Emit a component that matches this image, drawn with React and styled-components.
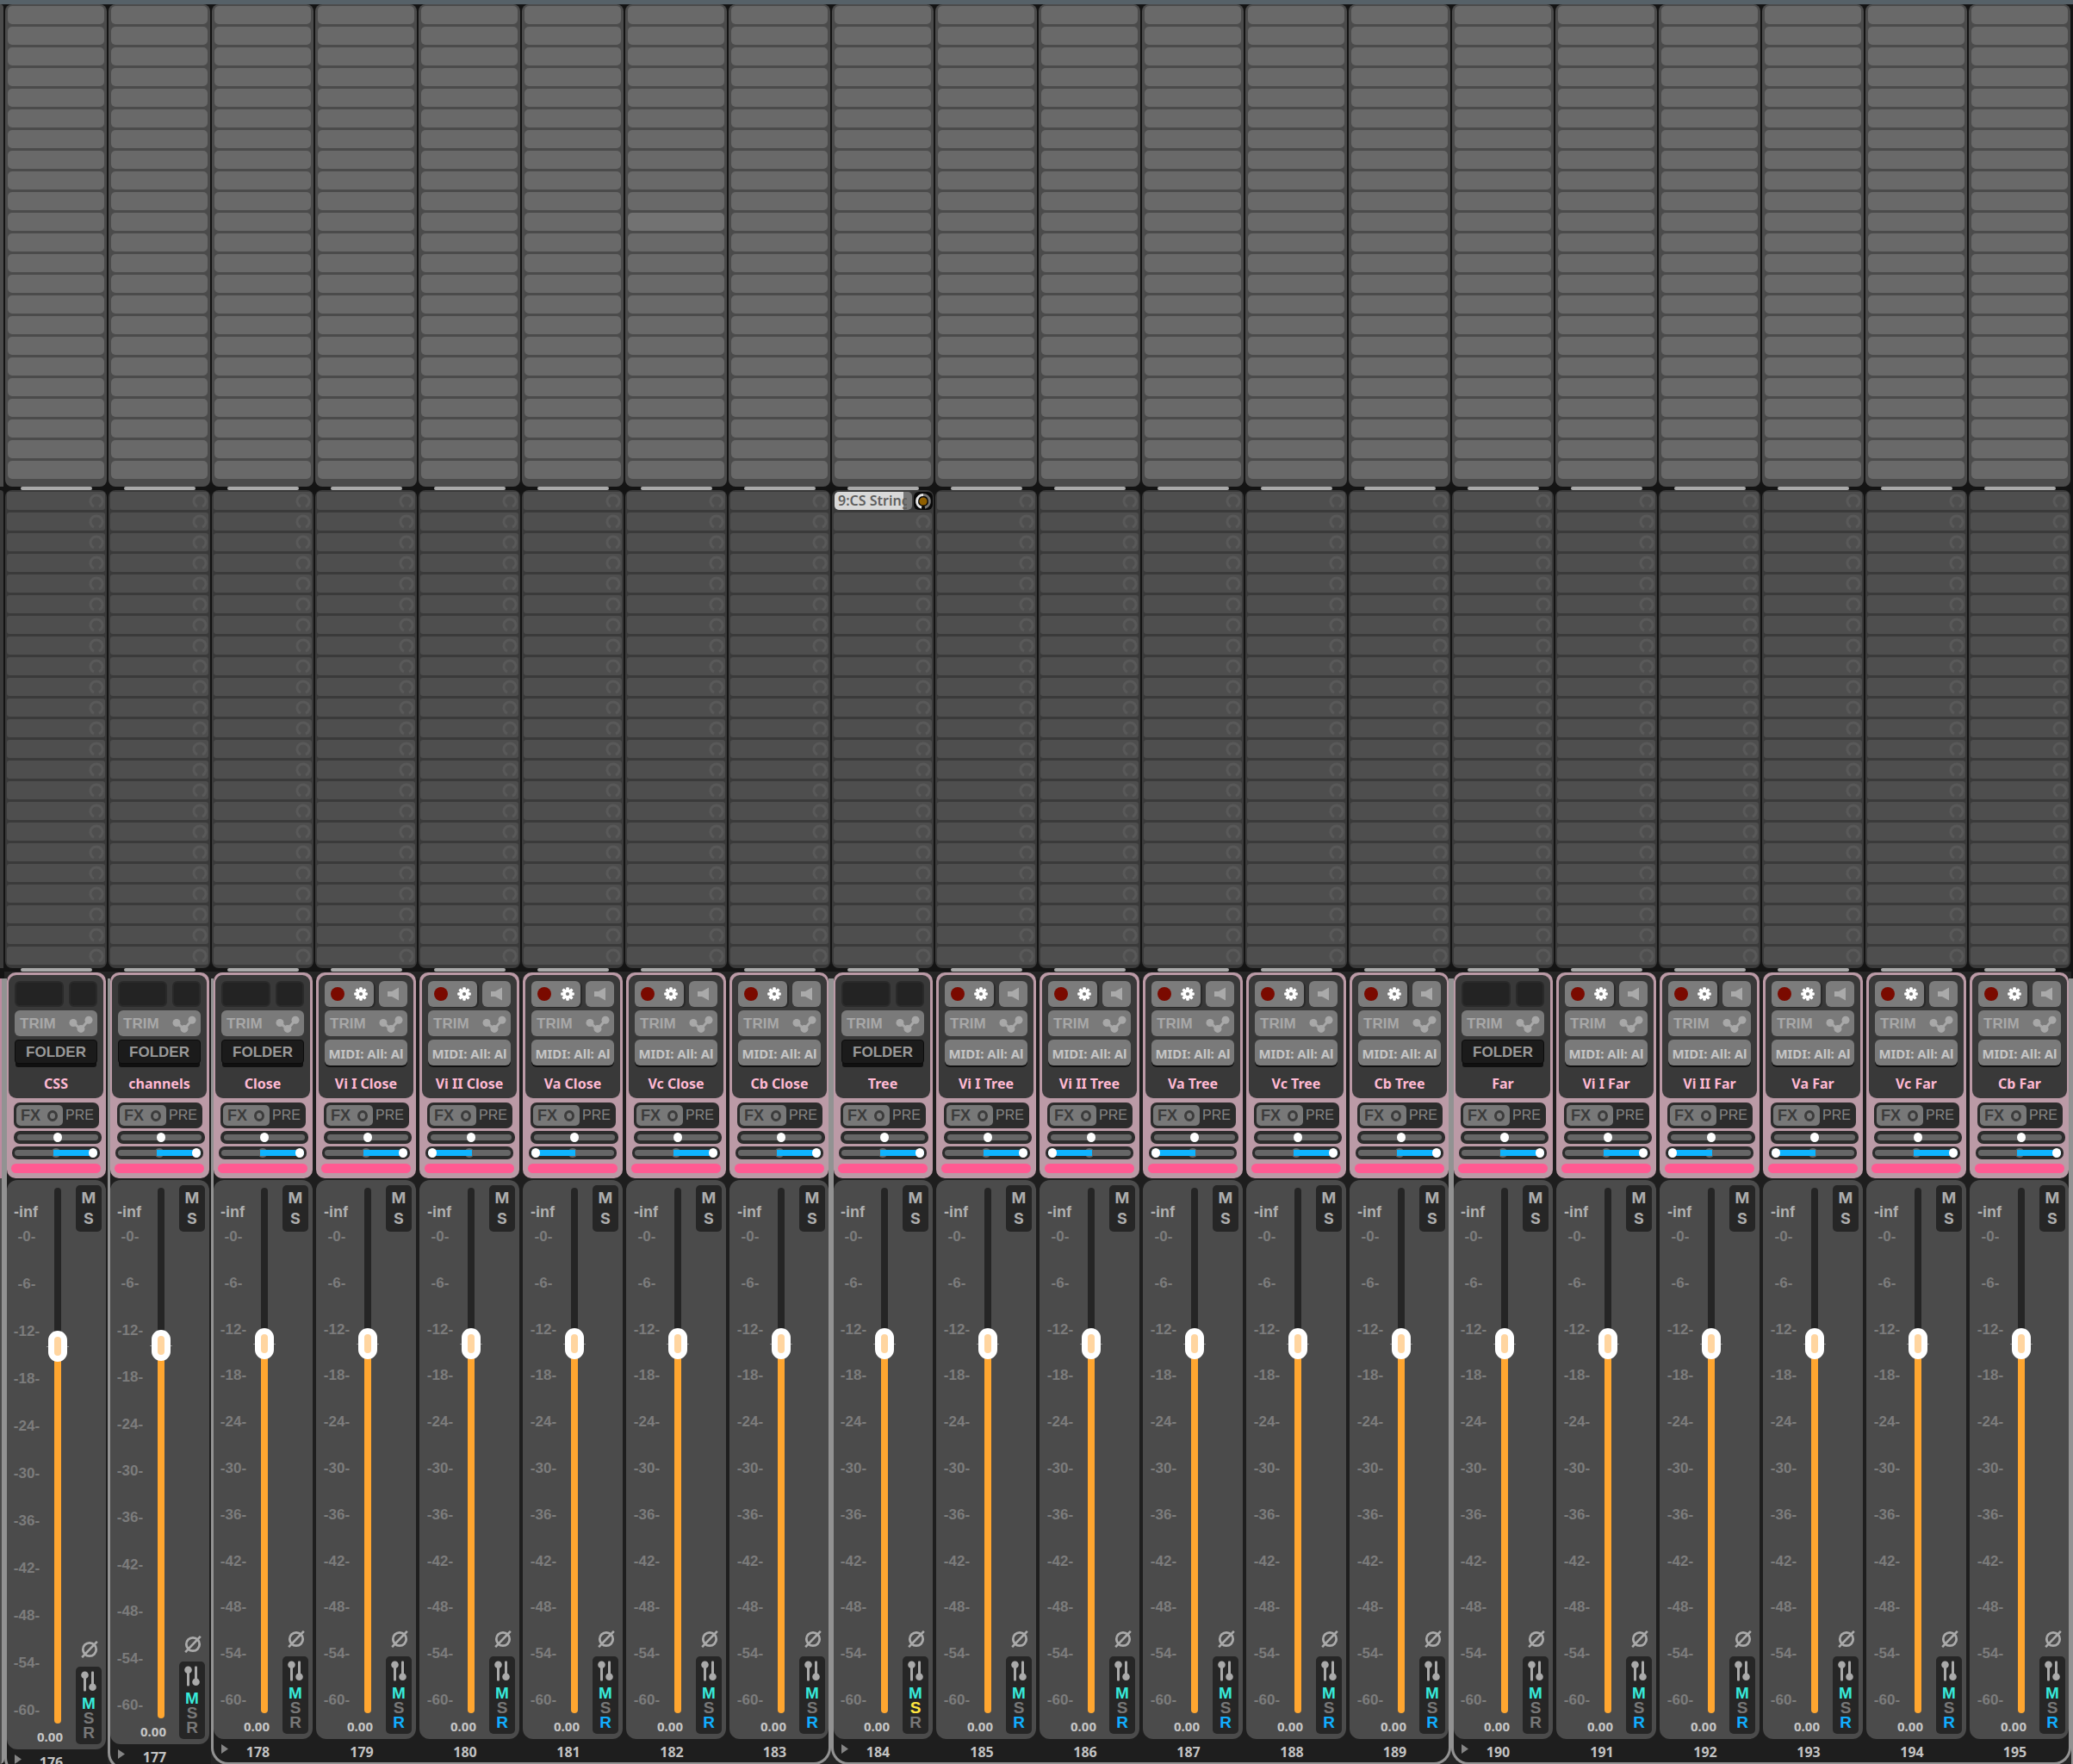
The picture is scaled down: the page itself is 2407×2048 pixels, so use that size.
import React from "react";
import styled, { createGlobalStyle, css } from "styled-components";

const sans = '"Liberation Sans", Arial, sans-serif';
const noto = '"Noto Sans", "Open Sans", sans-serif';

const GlobalStyle = createGlobalStyle`
  *, *::before, *::after { box-sizing: border-box; }
  html, body { margin: 0; background: #141414; }
  button, input { margin: 0; padding: 0; border: 0; font: inherit; }
`;

/* ---------- page ---------- */
const Page = styled.div`
  display: flex;
  flex-direction: column;
  height: 100vh;
  overflow: hidden;
  background: #141414;
  font-family: ${sans};
`;
const TopBar = styled.header`
  flex: none;
  height: 5px;
  background: #566168;
`;
const Mixer = styled.main`
  flex: 1;
  min-height: 0;
  display: flex;
`;
const Strip = styled.section`
  flex: 1 1 0;
  min-width: 0;
  display: flex;
  flex-direction: column;
`;

/* ---------- inserts and sends ---------- */
const InsertRack = styled.div`
  flex: none;
  display: grid;
  grid-auto-rows: 21px;
  gap: 3px;
  margin: 0 1px;
  padding: 2px 3px 9px;
  border-radius: 8px;
  background: #4b4b4b;
`;
const InsertSlot = styled.button`
  border-radius: 5px;
  background: ${(p) => (p.$hover ? "#727272" : "#696969")};
`;
const Divider = styled.div`
  flex: none;
  height: 4px;
  margin: 0 18px 0 19px;
  border-radius: 2px;
  background: #a9a9a9;
`;
const SendRack = styled(InsertRack)`
  padding: 2px 2px 4px;
  background: #3a3a3a;
`;
const SendRow = styled.div`
  display: flex;
  justify-content: space-between;
`;
const SendSlot = styled.button`
  flex: 1;
  display: flex;
  align-items: center;
  justify-content: flex-end;
  padding-right: 1px;
  border-radius: 3px;
  background: #4e4e4e;
`;
const SendName = styled.button`
  width: 90px;
  padding: 0 6px 0 4px;
  margin-left: 1px;
  border-radius: 5px;
  text-align: left;
  font: 600 16px/21px ${noto};
  color: #5f5f5f;
  background: linear-gradient(to right, #d9d9d9 80px, #777 80px);
`;
const SendText = styled.span`
  display: block;
  overflow: hidden;
  white-space: nowrap;
`;
const SendKnob = styled.button`
  width: 22px;
  margin-right: -1px;
  border-radius: 6px;
  background: #090909;
  display: grid;
  place-items: center;
`;

/* ---------- lower half of a strip ---------- */
const Channel = styled.div`
  position: relative;
  z-index: 0;
  flex: 1;
  min-height: 0;
  display: flex;
  flex-direction: column;
  gap: 2px;
  padding: 1px 2px 0;
  padding-left: ${(p) => (p.$first ? 3 : 2)}px;
  padding-right: ${(p) => (p.$last ? 3 : 2)}px;
  background: #252525;

  &::before {
    content: "";
    position: absolute;
    z-index: -1;
    inset: 8px 0 ${(p) => -1 - p.$drop}px 0;
    background: #1e1e1e;
    border: 0 solid #929292;
    border-bottom-width: 3px;
    ${(p) => p.$first && css`
      border-left-width: 3px;
      border-bottom-left-radius: 20px;
    `}
    ${(p) => p.$last && css`
      border-right-width: 3px;
      border-bottom-right-radius: 20px;
    `}
  }
`;
const Head = styled.div`
  flex: none;
  display: flex;
  flex-direction: column;
  height: 239px;
  padding: 3px 3px 6px;
  padding-left: ${(p) => (p.$first ? 2 : 3)}px;
  padding-right: ${(p) => (p.$last ? 2 : 3)}px;
  border-radius: 10px;
  background: #bb9aa6;
`;
const Card = styled.div`
  display: grid;
  grid-template-rows: 30px 30px 30px 1fr;
  row-gap: 4px;
  height: 143px;
  padding: 7px 7px 0;
  border-radius: 9px;
  background: #393939;
`;
const InputRow = styled.div`
  display: grid;
  grid-template-columns: 57px 33px;
  justify-content: space-between;
`;
const ArmButton = styled.button`
  display: flex;
  align-items: center;
  justify-content: space-between;
  padding: 0 7px;
  border-radius: 6px;
  background: #7c7c7c;
  box-shadow: 2px 1px 0 #2a2a2a;
`;
const RecordDot = styled.span`
  width: 16px;
  height: 16px;
  border-radius: 50%;
  background: #7a0a00;
`;
const MonitorButton = styled.button`
  display: grid;
  place-items: center;
  border-radius: 6px;
  background: #7c7c7c;
`;
const EmptyWell = styled.div`
  border: 2px solid #2a2a2a;
  border-radius: 6px;
  background: #232323;
`;
const TrimButton = styled.button`
  display: flex;
  align-items: center;
  justify-content: space-between;
  padding: 2px 5px 0 6px;
  border-radius: 6px;
  font: 700 17px/28px ${sans};
  color: #a8a8a8;
  background: #7a7a7a;
`;
const FolderButton = styled.button`
  height: 28px;
  padding-top: 1px;
  border: 1px solid #0c0c0c;
  border-radius: 4px;
  font: 700 17px/25px ${sans};
  color: #999;
  background: #1b1b1b;
  box-shadow: 0 5px 0 -1px #101010;
`;
const MidiButton = styled.button`
  overflow: hidden;
  white-space: nowrap;
  border-radius: 6px;
  font: 700 15px/32px ${noto};
  color: #c6c6c6;
  background: #7a7a7a;
  box-shadow: 0 2px 0 #101010;
`;
const TrackName = styled.h2`
  margin: 0;
  text-align: center;
  white-space: nowrap;
  font: 700 16px/34px ${noto};
  color: #ffb9d3;
`;
const FxRow = styled.div`
  display: grid;
  grid-template-columns: 54px 1fr;
  height: 30px;
  margin: 5px 5px 3px 6px;
  padding: 3px;
  border-radius: 7px;
  background: #2c2c2c;
`;
const FxButton = styled.button`
  display: flex;
  align-items: center;
  justify-content: space-between;
  padding: 0 6px 0 5px;
  border-radius: 5px;
  font: 700 18px/24px ${sans};
  color: #3c3c3c;
  background: #787878;
`;
const BypassRing = styled.span`
  width: 12px;
  height: 13px;
  border: 3px solid #3c3c3c;
  border-radius: 50%;
`;
const PreButton = styled.button`
  font: 400 16px/24px ${sans};
  color: #858585;
  background: none;
`;

const knob = css`
  appearance: none;
  width: 10px;
  height: 11px;
  margin-top: -2px;
  border-radius: 50%;
  background: #fff;
`;
const PanSlider = styled.input.attrs({ type: "range", min: 0, max: 100 })`
  appearance: none;
  display: block;
  flex: none;
  width: auto;
  height: 15px;
  margin: 0 2px 3px 6px;
  padding: 0 4px;
  border-radius: 7px;
  background: #2c2c2c;
  &::-webkit-slider-runnable-track {
    height: 7px;
    border-radius: 4px;
    background: #666;
  }
  &::-webkit-slider-thumb { ${knob} }
`;
const WidthSlider = styled(PanSlider)`
  margin: 0 4px 5px;
  padding: 0 3px;
  background: radial-gradient(circle at center, #666 5px, #2c2c2c 6px);
  &::-webkit-slider-runnable-track {
    background: ${(p) =>
      p.$left
        ? "linear-gradient(to right, #0fb4ff 53%, #666 53%)"
        : "linear-gradient(to right, #666 47%, #0fb4ff 47%)"};
  }
`;
const ColorBar = styled.div`
  height: 11px;
  margin: 0 3px;
  border-radius: 6px;
  background: #ff5a92;
`;

/* ---------- fader ---------- */
const FaderPanel = styled.div`
  flex: 1;
  min-height: 0;
  display: grid;
  grid-template-columns: 46px 26px 1fr;
  padding-left: ${(p) => (p.$first ? 0 : 1)}px;
  border-radius: 12px;
  background: #4b4b4b;
`;
const ScaleColumn = styled.div`
  display: flex;
  flex-direction: column;
  min-height: 0;
`;
const Peak = styled.output`
  margin-top: 27px;
  padding-left: 8px;
  font: 700 18px/20px ${sans};
  color: #b0b0b0;
`;
const Scale = styled.ol`
  flex: 1;
  display: flex;
  flex-direction: column;
  justify-content: space-between;
  list-style: none;
  margin: 10px 0 0;
  padding: 0;
  text-align: center;
  font: 700 17px/18px ${sans};
  color: #7c7c7c;
`;
const Gain = styled.output`
  margin: 11px -19px 5px 0;
  text-align: right;
  white-space: nowrap;
  font: 700 15px/20px ${noto};
  color: #c6c6c6;
`;
const FaderColumn = styled.div`
  display: flex;
  min-height: 0;
  padding: 9px 0 30px;
`;
const Fader = styled.input.attrs({ type: "range", min: 0, max: 1000 })`
  appearance: none;
  writing-mode: vertical-lr;
  direction: rtl;
  width: 26px;
  height: 100%;
  background: linear-gradient(#8c8c8c, #8c8c8c) 0 29.7% / 26px 1px no-repeat;
  &::-webkit-slider-runnable-track {
    width: 8px;
    height: 100%;
    border-radius: 4px;
    background: linear-gradient(to bottom, #252525 30%, #ffa630 30%);
  }
  &::-webkit-slider-thumb {
    appearance: none;
    width: 22px;
    height: 36px;
    margin-left: -7px;
    border: 7px solid #fff;
    border-radius: 11px;
    background: #ffd5a0;
  }
`;
const ButtonColumn = styled.div`
  display: flex;
  flex-direction: column;
  align-items: flex-start;
  padding: 6px 0 6px 8px;
`;
const MuteSolo = styled.div`
  display: grid;
  grid-template-rows: 24px 24px;
  align-content: center;
  width: 30px;
  height: 54px;
  border-radius: 5px;
  background: #262626;
`;
const BigLetter = styled.button`
  font: 700 18px/24px Inter, ${sans};
  color: #adadad;
  background: none;
`;
const PhaseButton = styled.button`
  width: 32px;
  height: 20px;
  margin: auto 0 10px;
  background: none;
  display: grid;
  place-items: center;
`;
const ModeBox = styled.div`
  display: grid;
  grid-template-rows: 34px 17px 17px 17px;
  width: 30px;
  height: 90px;
  border-radius: 5px;
  background: #262626;
`;
const RoutingButton = styled.button`
  display: grid;
  place-items: center;
  background: none;
`;
const ModeLetter = styled.button`
  font: 700 19px/17px ${sans};
  color: ${(p) => p.$color || "#777"};
  background: none;
`;
const Footer = styled.footer`
  position: relative;
  flex: none;
  height: ${(p) => 27 - p.$drop}px;
  text-align: center;
  padding-right: ${(p) => (p.$first ? 12 : 10)}px;
  font: 700 16px/26px ${noto};
  color: #c2c2c2;
`;
const Arrow = styled.button`
  position: absolute;
  left: 9px;
  top: 4px;
  width: 8px;
  height: 11px;
  background: #858585;
  clip-path: polygon(0 0, 100% 50%, 0 100%);
`;

/* ---------- partial strips at the window edges ---------- */
const Edge = styled.div`
  flex: none;
  width: ${(p) => p.$w}px;
  display: flex;
  flex-direction: column;
  overflow: hidden;
`;
const EdgeRack = styled.div`
  flex: none;
  height: 560px;
  margin-right: 1px;
  border-top-right-radius: 4px;
  background: ${(p) => p.$color};
`;
const EdgeRackLow = styled(EdgeRack)`
  height: 555px;
  margin-top: 4px;
`;
const EdgeHead = styled.div`
  flex: none;
  height: 232px;
  margin-top: 12px;
  background: #bd8ba0;
  border-right: 3px solid #929292;
`;
const EdgeFader = styled.div`
  flex: 1;
  border-right: 3px solid #929292;
  border-bottom-right-radius: 20px;
  background: #4b4b4b;
`;
const EdgeLine = styled.div`
  flex: 1;
  margin-top: 1131px;
  background: #929292;
`;

/* ---------- icons ---------- */
const Ring = () => (
  <svg width="18" height="18" viewBox="0 0 18 18" fill="none" aria-hidden="true">
    <path d="M6 15.2A7 7 0 1 1 12 15.2" stroke="#595959" strokeWidth="3" />
  </svg>
);
const LevelKnob = () => (
  <svg width="20" height="20" viewBox="0 0 20 20" fill="none" aria-hidden="true">
    <path d="M8 17.2A7.5 7.5 0 0 1 10 2.5" stroke="#e6e6e6" strokeWidth="3" />
    <path d="M10 2.5A7.5 7.5 0 0 1 12 17.2" stroke="#747474" strokeWidth="3" />
    <circle cx="10" cy="10" r="4.6" fill="#8f5f00" />
  </svg>
);
const Gear = () => (
  <svg width="16" height="16" viewBox="0 0 16 16" aria-hidden="true">
    {[0, 45, 90, 135].map((a) => (
      <rect key={a} x="6.2" y="0.2" width="3.6" height="15.6" rx="1" fill="#fff" transform={`rotate(${a} 8 8)`} />
    ))}
    <circle cx="8" cy="8" r="5.6" fill="#fff" />
    <circle cx="8" cy="8" r="2.1" fill="#7c7c7c" />
  </svg>
);
const Speaker = () => (
  <svg width="14" height="16" viewBox="0 0 14 16" aria-hidden="true">
    <path d="M0 5h5l8-4.500v15L5 11H0z" fill="#aaa" />
  </svg>
);
const Envelope = () => (
  <svg width="28" height="20" viewBox="0 0 28 20" aria-hidden="true">
    <path d="M5 8.500 14 16 23 5" fill="none" stroke="#a8a8a8" strokeWidth="3" />
    <circle cx="5" cy="8.500" r="4.500" fill="#a8a8a8" />
    <circle cx="14" cy="15.400" r="4.500" fill="#a8a8a8" />
    <circle cx="23" cy="5.200" r="4.500" fill="#a8a8a8" />
  </svg>
);
const Phase = () => (
  <svg width="20" height="20" viewBox="0 0 20 20" fill="none" stroke="#aaa" aria-hidden="true">
    <circle cx="10" cy="10" r="7.700" strokeWidth="2.800" />
    <path d="M1.200 19.200 18.800 0.800" strokeWidth="2.600" />
  </svg>
);
const Routing = () => (
  <svg width="18" height="24" viewBox="0 0 18 24" fill="#aaa" aria-hidden="true">
    <rect x="3" y="3" width="3" height="20.500" rx="1" />
    <rect x="12" y="0.500" width="3" height="19" rx="1" />
    <circle cx="4.500" cy="4.800" r="4.300" />
    <circle cx="13.500" cy="18.700" r="4.300" />
  </svg>
);

/* ---------- data ---------- */
const parts = ["Vi I", "Vi II", "Va", "Vc", "Cb"];
const section = (mic) => [
  { name: mic, folder: true, first: true },
  ...parts.map((part, i) => ({
    name: `${part} ${mic}`,
    left: part === "Vi II" || part === "Va",
    last: i === parts.length - 1,
  })),
];
const tracks = [
  { name: "CSS", folder: true, first: true, drop: 12 },
  { name: "channels", folder: true, first: true, drop: 6 },
  ...section("Close"),
  ...section("Tree").map((t) => (t.folder ? { ...t, send: "9:CS String", solo: true } : t)),
  ...section("Far"),
].map((t, i) => ({ drop: 0, ...t, number: 176 + i }));

const slots = Array.from({ length: 23 }, (_, i) => i);
const marks = [0, 6, 12, 18, 24, 30, 36, 42, 48, 54, 60];

function Track({ track }) {
  const { name, number, folder, first, last, left, drop, send, solo } = track;
  return (
    <Strip aria-label={name}>
      <InsertRack>
        {slots.map((i) => (
          <InsertSlot key={i} $hover={number === 182 && i === 10} aria-label={`${name} insert ${i + 1}`} />
        ))}
      </InsertRack>
      <Divider />
      <SendRack>
        {slots.map((i) => (
          <SendRow key={i}>
            {send && i === 0 ? (
              <>
                <SendName><SendText>{send}</SendText></SendName>
                <SendKnob aria-label="Send level"><LevelKnob /></SendKnob>
              </>
            ) : (
              <SendSlot aria-label={`${name} send ${i + 1}`}><Ring /></SendSlot>
            )}
          </SendRow>
        ))}
      </SendRack>
      <Divider />
      <Channel $first={first} $last={last} $drop={drop}>
        <Head $first={first} $last={last}>
          <Card>
            <InputRow>
              {folder ? (
                <>
                  <EmptyWell />
                  <EmptyWell />
                </>
              ) : (
                <>
                  <ArmButton aria-label="Record arm"><RecordDot /><Gear /></ArmButton>
                  <MonitorButton aria-label="Monitor"><Speaker /></MonitorButton>
                </>
              )}
            </InputRow>
            <TrimButton>TRIM<Envelope /></TrimButton>
            {folder ? <FolderButton>FOLDER</FolderButton> : <MidiButton>MIDI: All: Al</MidiButton>}
            <TrackName>{name}</TrackName>
          </Card>
          <FxRow>
            <FxButton>FX<BypassRing /></FxButton>
            <PreButton>PRE</PreButton>
          </FxRow>
          <PanSlider defaultValue={50} aria-label={`${name} pan`} />
          <WidthSlider $left={left} defaultValue={left ? 0 : 100} aria-label={`${name} width`} />
          <ColorBar />
        </Head>
        <FaderPanel $first={first}>
          <ScaleColumn>
            <Peak>-inf</Peak>
            <Scale>{marks.map((m) => <li key={m}>-{m}-</li>)}</Scale>
            <Gain>0.00</Gain>
          </ScaleColumn>
          <FaderColumn>
            <Fader defaultValue={716} aria-label={`${name} volume`} />
          </FaderColumn>
          <ButtonColumn>
            <MuteSolo>
              <BigLetter>M</BigLetter>
              <BigLetter>S</BigLetter>
            </MuteSolo>
            <PhaseButton aria-label="Phase"><Phase /></PhaseButton>
            <ModeBox>
              <RoutingButton aria-label="Routing"><Routing /></RoutingButton>
              <ModeLetter $color="#38eadb">M</ModeLetter>
              <ModeLetter $color={solo && "#ffe640"}>S</ModeLetter>
              <ModeLetter $color={!folder && "#12aeff"}>R</ModeLetter>
            </ModeBox>
          </ButtonColumn>
        </FaderPanel>
        <Footer $drop={drop} $first={first}>
          {folder && <Arrow aria-label={`Collapse ${name}`} />}
          {number}
        </Footer>
      </Channel>
    </Strip>
  );
}

export default function App() {
  return (
    <Page>
      <GlobalStyle />
      <TopBar />
      <Mixer>
        <Edge $w={5}>
          <EdgeRack $color="#4b4b4b" />
          <EdgeRackLow $color="#3a3a3a" />
          <EdgeHead />
          <EdgeFader />
        </Edge>
        {tracks.map((t) => <Track key={t.number} track={t} />)}
        <Edge $w={2}>
          <EdgeLine />
        </Edge>
      </Mixer>
    </Page>
  );
}
